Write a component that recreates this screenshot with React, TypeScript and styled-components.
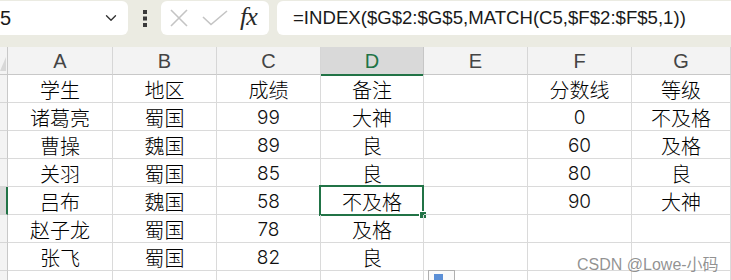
import React from "react";
import styled, { createGlobalStyle } from "styled-components";
import { ChevronDown } from "lucide-react";

const Global = createGlobalStyle`
  html, body { margin: 0; padding: 0; background: #ffffff; overflow: hidden; }
  body { font-family: "Liberation Sans", "Noto Sans CJK SC", sans-serif; }
`;

const GREEN = "#217346";
const GRID = "#dadada";

const Page = styled.div`
  width: 731px;
  height: 280px;
  overflow: hidden;
  display: flex;
  flex-direction: column;
`;

const TopBar = styled.div`
  height: 47px;
  flex: none;
  background: #ebebe2;
  display: flex;
  align-items: flex-start;
  padding-top: 1px;
  box-sizing: border-box;
`;

const NameBox = styled.div`
  width: 134px;
  height: 34px;
  margin-left: -6px;
  background: #fff;
  border-radius: 6px;
  display: flex;
  align-items: center;
  justify-content: space-between;
  padding: 0 8px 0 6px;
  box-sizing: border-box;
  font-size: 20px;
  color: #1a1a1a;
`;

const NameText = styled.span`
  letter-spacing: 0;
`;

const Dots = styled.div`
  width: 33px;
  height: 34px;
  display: flex;
  align-items: center;
  justify-content: center;
`;

const FuncBox = styled.div`
  width: 108px;
  height: 34px;
  background: #fff;
  border-radius: 6px;
  display: flex;
  align-items: center;
  padding-left: 8px;
  box-sizing: border-box;
`;

const Gap = styled.span`
  width: 13px;
`;

const Fx = styled.span`
  font-family: "Liberation Serif", "DejaVu Serif", serif;
  font-style: italic;
  font-size: 26px;
  color: #2a2a2a;
  margin-left: 12px;
  margin-top: -3px;
  letter-spacing: -1px;
`;

const FormulaBox = styled.div`
  flex: 1;
  height: 34px;
  margin-left: 8px;
  background: #fff;
  border-radius: 6px 0 0 6px;
  display: flex;
  align-items: center;
  padding-left: 16px;
  font-size: 18.6px;
  color: #1a1a1a;
  white-space: nowrap;
`;

const Sheet = styled.div`
  display: grid;
  grid-template-columns: 8px 105px 104px 104px 103px 104px 104px 99px;
  grid-auto-rows: 28px;
  position: relative;
`;

const ColHead = styled.div<{ $active?: boolean }>`
  box-sizing: border-box;
  background: ${(p) => (p.$active ? "#d9d9d9" : "#f3f3f3")};
  border-right: 1px solid ${(p) => (p.$active ? "#c6c6c6" : "#d6d6d6")};
  border-bottom: ${(p) => (p.$active ? `2px solid ${GREEN}` : "1px solid #c8c8c8")};
  ${(p) => (p.$active ? "margin-bottom: -1px;" : "")}
  display: flex;
  align-items: center;
  justify-content: center;
  font-size: 20px;
  color: ${(p) => (p.$active ? GREEN : "#444")};
  padding-top: 1px;
`;

const Corner = styled.div`
  box-sizing: border-box;
  background: #f3f3f3;
  border-right: 1px solid #c8c8c8;
  border-bottom: 1px solid #c8c8c8;
  position: relative;
  overflow: hidden;
  &::after {
    content: "";
    position: absolute;
    right: 1px;
    bottom: 3px;
    border-left: 6px solid transparent;
    border-bottom: 14px solid #d8d8d8;
  }
`;

const RowHead = styled.div<{ $active?: boolean }>`
  box-sizing: border-box;
  background: ${(p) => (p.$active ? "#d9d9d9" : "#f3f3f3")};
  border-right: ${(p) => (p.$active ? `2px solid ${GREEN}` : "1px solid #c8c8c8")};
  border-bottom: 1px solid #d6d6d6;
`;

const Cell = styled.div`
  box-sizing: border-box;
  border-right: 1px solid ${GRID};
  border-bottom: 1px solid ${GRID};
  display: flex;
  align-items: center;
  justify-content: center;
  font-size: 20px;
  color: #000;
  position: relative;
  white-space: nowrap;
  padding-top: 1px;
`;

const Value = styled.span<{ $cjk: boolean }>`
  font-family: ${(p) =>
    p.$cjk ? `"Noto Sans CJK SC", sans-serif` : `"Inter", "Liberation Sans", sans-serif`};
  font-weight: 300;
  font-size: ${(p) => (p.$cjk ? "20px" : "19px")};
  color: ${(p) => (p.$cjk ? "#000" : "#111")};
`;

const Selection = styled.div`
  position: absolute;
  left: -2px;
  top: -2px;
  right: -1px;
  bottom: -2px;
  border: 2px solid ${GREEN};
  pointer-events: none;
  &::after {
    content: "";
    position: absolute;
    right: -5px;
    bottom: -5px;
    width: 6px;
    height: 6px;
    background: ${GREEN};
    border: 1px solid #fff;
  }
`;

const PasteIcon = styled.div`
  position: absolute;
  left: 428px;
  top: 223px;
  width: 27px;
  height: 14px;
  border: 1px solid #b0b0b0;
  background: #fafafa;
  box-sizing: border-box;
  &::after {
    content: "";
    position: absolute;
    left: 5px;
    top: 3px;
    width: 9px;
    height: 8px;
    background: #5b8fd6;
  }
`;

const Watermark = styled.div`
  position: absolute;
  left: 577px;
  top: 204px;
  font-size: 16px;
  color: rgba(110, 110, 110, 0.75);
  white-space: nowrap;
  font-family: "Liberation Sans", "Noto Sans CJK SC", sans-serif;
`;

const cols = ["A", "B", "C", "D", "E", "F", "G"];

const data: string[][] = [
  ["学生", "地区", "成绩", "备注", "", "分数线", "等级"],
  ["诸葛亮", "蜀国", "99", "大神", "", "0", "不及格"],
  ["曹操", "魏国", "89", "良", "", "60", "及格"],
  ["关羽", "蜀国", "85", "良", "", "80", "良"],
  ["吕布", "魏国", "58", "不及格", "", "90", "大神"],
  ["赵子龙", "蜀国", "78", "及格", "", "", ""],
  ["张飞", "蜀国", "82", "良", "", "", ""],
  ["", "", "", "", "", "", ""],
  ["", "", "", "", "", "", ""],
];

const XIcon = () => (
  <svg width="20" height="20" viewBox="0 0 20 20">
    <path d="M2 2 L18 18 M18 2 L2 18" stroke="#c4c4c4" strokeWidth="1.6" fill="none" />
  </svg>
);

const CheckIcon = () => (
  <svg width="26" height="16" viewBox="0 0 26 16">
    <path d="M1 7 L9 14.5 L25 1" stroke="#c4c4c4" strokeWidth="1.6" fill="none" />
  </svg>
);

const DotsIcon = () => (
  <svg width="6" height="18" viewBox="0 0 6 18">
    <rect x="1" y="1" width="4" height="4" fill="#3a3a3a" />
    <rect x="1" y="7.5" width="4" height="4" fill="#3a3a3a" />
    <rect x="1" y="14" width="4" height="4" fill="#3a3a3a" />
  </svg>
);

export default function App() {
  return (
    <Page>
      <Global />
      <TopBar>
        <NameBox>
          <NameText>5</NameText>
          <ChevronDown size={18} color="#333" strokeWidth={1.8} />
        </NameBox>
        <Dots>
          <DotsIcon />
        </Dots>
        <FuncBox>
          <XIcon />
          <Gap />
          <CheckIcon />
          <Fx>fx</Fx>
        </FuncBox>
        <FormulaBox>=INDEX($G$2:$G$5,MATCH(C5,$F$2:$F$5,1))</FormulaBox>
      </TopBar>
      <Sheet>
        <Corner />
        {cols.map((c) => (
          <ColHead key={c} $active={c === "D"}>
            {c}
          </ColHead>
        ))}
        {data.map((row, r) => (
          <React.Fragment key={r}>
            <RowHead $active={r === 4} />
            {row.map((v, c) => (
              <Cell key={c}>
                {v && <Value $cjk={!/^\d+$/.test(v)}>{v}</Value>}
                {r === 4 && c === 3 && <Selection />}
              </Cell>
            ))}
          </React.Fragment>
        ))}
        <PasteIcon />
        <Watermark>CSDN @Lowe-小码</Watermark>
      </Sheet>
    </Page>
  );
}
